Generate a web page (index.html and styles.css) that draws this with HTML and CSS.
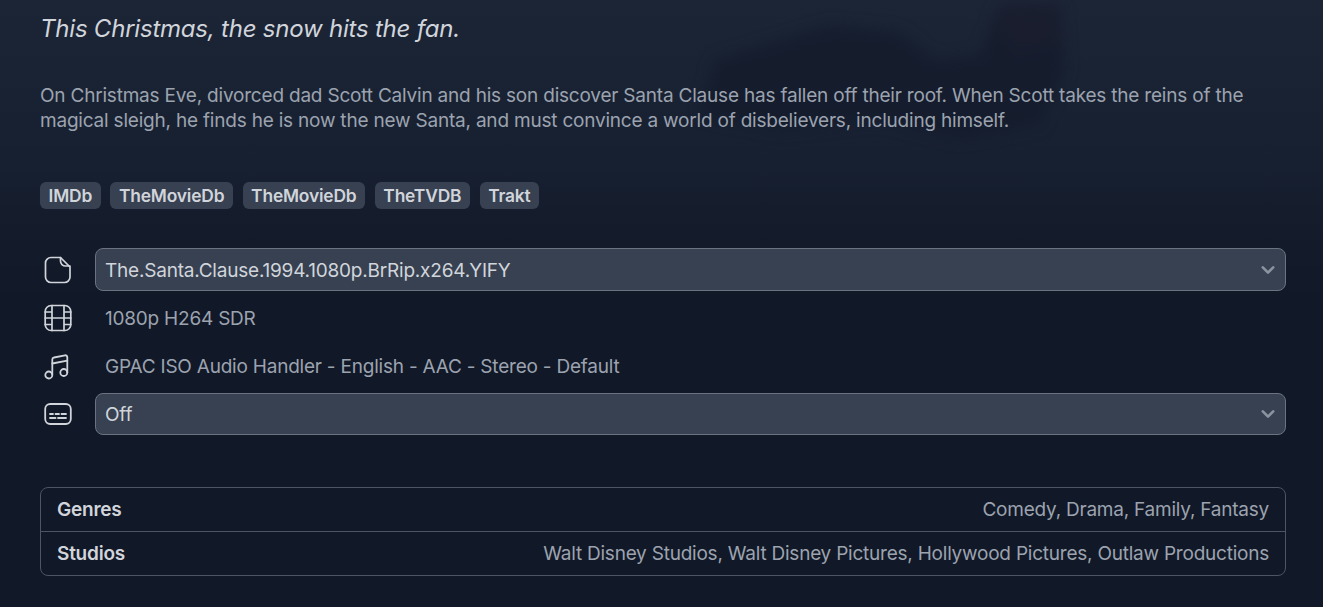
FILE: index.html
```html
<!DOCTYPE html>
<html lang="en">
<head>
<meta charset="utf-8">
<title>The Santa Clause</title>
<link rel="stylesheet" href="styles.css">
</head>
<body>
<svg class="backdrop" viewBox="0 0 1323 300" preserveAspectRatio="none" aria-hidden="true">
  <defs>
    <linearGradient id="fade" gradientUnits="userSpaceOnUse" x1="0" y1="0" x2="0" y2="300">
      <stop offset="0" stop-color="#1c2536"/>
      <stop offset="0.45" stop-color="#182132"/>
      <stop offset="1" stop-color="#111827"/>
    </linearGradient>
    <filter id="soft" filterUnits="userSpaceOnUse" x="-60" y="-60" width="1443" height="420" color-interpolation-filters="sRGB"><feGaussianBlur stdDeviation="7"/></filter>
  </defs>
  <rect x="0" y="0" width="1323" height="300" fill="url(#fade)"/>
  <g filter="url(#soft)">
    <path d="M715 60 L830 25 L900 32 L935 60 L980 55 L1000 5 L1060 5 L1065 70 L1040 125 L960 140 L880 120 L780 130 L700 115 Z" fill="#141c2c" opacity="0.8"/>
    <path d="M1000 5 L1055 2 L1062 40 L1020 55 L1000 35 Z" fill="#2a2030" opacity="0.22"/>
  </g>
</svg>
<main class="page">
  <h2 class="tagline">This Christmas, the snow hits the fan.</h2>
  <p class="overview">On Christmas Eve, divorced dad Scott Calvin and his son discover Santa Clause has fallen off their roof. When Scott takes the reins of the magical sleigh, he finds he is now the new Santa, and must convince a world of disbelievers, including himself.</p>
  <div class="tags">
    <a class="tag">IMDb</a>
    <a class="tag">TheMovieDb</a>
    <a class="tag">TheMovieDb</a>
    <a class="tag">TheTVDB</a>
    <a class="tag">Trakt</a>
  </div>
  <div class="streams">
    <div class="stream">
      <svg class="icon" viewBox="0 0 28 28" fill="none" stroke="currentColor" stroke-width="1.700" stroke-linecap="round" stroke-linejoin="round"><path d="M7 1.500h9.500l9.500 9.500v10a5.500 5.500 0 0 1-5.500 5.500H7A5.500 5.500 0 0 1 1.500 21V7A5.500 5.500 0 0 1 7 1.500Z"/><path d="M16.500 1.500v3.500a5 5 0 0 0 5 5h4.500"/></svg>
      <div class="select">The.Santa.Clause.1994.1080p.BrRip.x264.YIFY
        <svg class="chevron" viewBox="0 0 20 20" fill="currentColor"><path fill-rule="evenodd" d="M5.293 7.293a1 1 0 0 1 1.414 0L10 10.586l3.293-3.293a1 1 0 1 1 1.414 1.414l-4 4a1 1 0 0 1-1.414 0l-4-4a1 1 0 0 1 0-1.414Z" clip-rule="evenodd"/></svg>
      </div>
    </div>
    <div class="stream">
      <svg class="icon" viewBox="0 0 28 28" fill="none" stroke="currentColor" stroke-width="1.700" stroke-linecap="round" stroke-linejoin="round"><rect x="1.200" y="1.500" width="25.600" height="25" rx="6"/><path d="M8 1.500v25M20 1.500v25M1.200 14h25.600M1.200 8h6.800M20 8h6.800M1.200 20.500h6.800M20 20.500h6.800"/></svg>
      <div class="info">1080p H264 SDR</div>
    </div>
    <div class="stream">
      <svg class="icon" viewBox="0 0 28 28" fill="none" stroke="currentColor" stroke-width="1.800" stroke-linecap="round" stroke-linejoin="round"><path d="M8.300 22.500V7.500a2 2 0 0 1 1.700-2l11-2.200a2 2 0 0 1 2.300 2V20.500"/><path d="M8.300 11.500l15-2.800"/><circle cx="4.800" cy="23" r="3.500"/><circle cx="19.800" cy="20.500" r="3.500"/></svg>
      <div class="info">GPAC ISO Audio Handler - English - AAC - Stereo - Default</div>
    </div>
    <div class="stream">
      <svg class="icon" viewBox="0 0 28 28" fill="none" stroke="currentColor" stroke-width="1.800" stroke-linecap="round" stroke-linejoin="round"><rect x="1.200" y="4" width="25.600" height="20" rx="5"/><path d="M6 14h3M11.500 14h3.500M17.500 14h4.500M6 18h5.500M14 18h8"/></svg>
      <div class="select select-short">Off
        <svg class="chevron" viewBox="0 0 20 20" fill="currentColor"><path fill-rule="evenodd" d="M5.293 7.293a1 1 0 0 1 1.414 0L10 10.586l3.293-3.293a1 1 0 1 1 1.414 1.414l-4 4a1 1 0 0 1-1.414 0l-4-4a1 1 0 0 1 0-1.414Z" clip-rule="evenodd"/></svg>
      </div>
    </div>
  </div>
  <dl class="facts">
    <div class="fact"><dt>Genres</dt><dd>Comedy, Drama, Family, Fantasy</dd></div>
    <div class="fact"><dt>Studios</dt><dd>Walt Disney Studios, Walt Disney Pictures, Hollywood Pictures, Outlaw Productions</dd></div>
  </dl>
</main>
</body>
</html>
```
FILE: styles.css
```css
* { box-sizing: border-box; }
html, body { margin: 0; height: 100%; }
body {
  background: #111827;
  font-family: Inter, "Liberation Sans", sans-serif;
  color: #9ca3af;
  overflow: hidden;
  position: relative;
}
.backdrop {
  position: absolute;
  top: 0;
  left: 0;
  width: 100%;
  height: 300px;
}
.page {
  position: relative;
  padding: 14px 37px 0 40px;
}
.tagline {
  margin: 0;
  font-size: 24px;
  letter-spacing: -0.009em;
  line-height: 30px;
  font-style: italic;
  font-weight: 400;
  color: #d1d5db;
}
.overview {
  margin: 39px 0 0;
  font-size: 19px;
  letter-spacing: -0.0108em;
  line-height: 25px;
  color: #9ca3af;
}
.tags {
  display: flex;
  gap: 9.800px;
  margin-top: 49px;
}
.tag {
  display: block;
  height: 27px;
  line-height: 27px;
  padding: 0 8.500px;
  border-radius: 6px;
  background: #374151;
  color: #d1d5db;
  font-size: 17.400px;
  letter-spacing: -0.01em;
  font-weight: 600;
}
.streams {
  display: flex;
  flex-direction: column;
  gap: 6px;
  margin-top: 39px;
}
.stream {
  display: flex;
  align-items: center;
  gap: 23px;
  height: 42px;
}
.stream:first-child { height: 43px; }
.icon {
  flex: none;
  width: 28px;
  height: 28px;
  margin-left: 4px;
  color: #d1d5db;
}
.select {
  flex: 1;
  display: flex;
  align-items: center;
  justify-content: space-between;
  height: 100%;
  padding: 1px 4px 0 9px;
  background: #374151;
  border: 1px solid #6b7280;
  border-radius: 8px;
  color: #d1d5db;
  font-size: 19px;
  letter-spacing: -0.011em;
}
.select-short { padding-top: 0; }
.chevron {
  width: 26px;
  height: 26px;
  color: #8b92a0;
}
.info {
  padding-left: 10px;
  font-size: 19px;
  letter-spacing: -0.0115em;
  color: #9ca3af;
}
.facts {
  margin: 52px 0 0;
  border: 1px solid #4b5563;
  border-radius: 8px;
}
.fact {
  display: flex;
  align-items: center;
  justify-content: space-between;
  height: 43px;
  padding: 0 16px 1px;
  font-size: 19px;
  letter-spacing: -0.012em;
}
.fact + .fact {
  height: 44px;
  border-top: 1px solid #4b5563;
}
dt { font-weight: 600; color: #d1d5db; }
dd { margin: 0; color: #9ca3af; }
```
